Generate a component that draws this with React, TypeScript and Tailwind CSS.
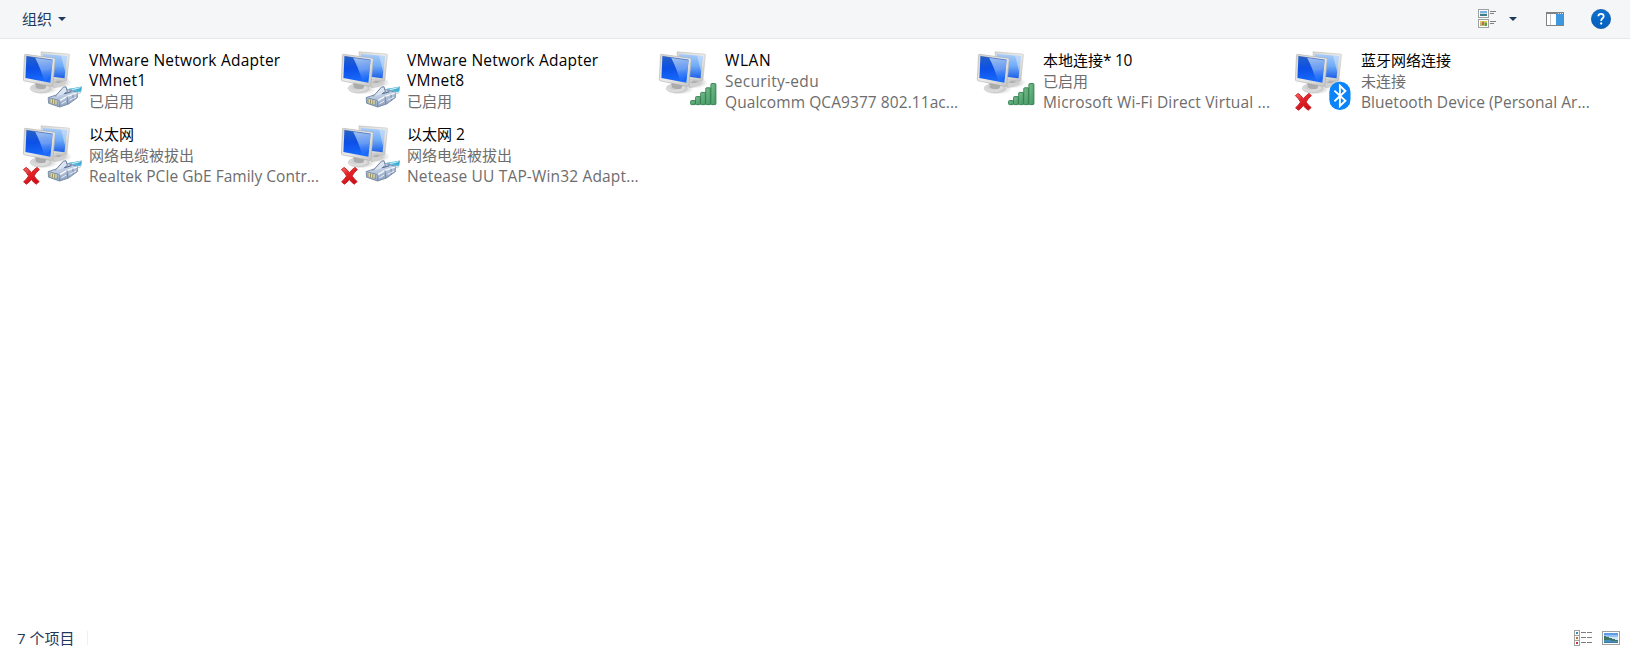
import type { ReactNode } from "react";

type Badge = "ethernet" | "signal" | "bluetooth";

interface Connection {
  id: string;
  title: ReactNode;
  status: ReactNode;
  device?: ReactNode;
  badge: Badge;
  disconnected?: boolean;
  compact?: boolean;
}

const connections: Connection[] = [
  {
    id: "vmnet1",
    title: (
      <>
        <span className="block leading-5 tracking-[0.22px]">VMware Network Adapter</span>
        <span className="block leading-5 tracking-[0.25px]">VMnet1</span>
      </>
    ),
    status: "已启用",
    badge: "ethernet",
    compact: true,
  },
  {
    id: "vmnet8",
    title: (
      <>
        <span className="block leading-5 tracking-[0.22px]">VMware Network Adapter</span>
        <span className="block leading-5 tracking-[0.25px]">VMnet8</span>
      </>
    ),
    status: "已启用",
    badge: "ethernet",
    compact: true,
  },
  {
    id: "wlan",
    title: <span className="tracking-[0.6px]">WLAN</span>,
    status: <span className="text-[15.5px] tracking-[0.3px]">Security-edu</span>,
    device: <span className="tracking-[0.07px]">Qualcomm QCA9377 802.11ac...</span>,
    badge: "signal",
  },
  {
    id: "local10",
    title: (
      <>
        <span className="text-[15px]">本地连接</span>
        <span className="tracking-[-0.3px]">* 10</span>
      </>
    ),
    status: "已启用",
    device: <span className="tracking-[0.15px]">Microsoft Wi-Fi Direct Virtual ...</span>,
    badge: "signal",
  },
  {
    id: "bluetooth",
    title: <span className="text-[15px]">蓝牙网络连接</span>,
    status: "未连接",
    device: <span className="tracking-[0.05px]">Bluetooth Device (Personal Ar...</span>,
    badge: "bluetooth",
    disconnected: true,
  },
  {
    id: "ethernet",
    title: <span className="text-[15px]">以太网</span>,
    status: "网络电缆被拔出",
    device: "Realtek PCIe GbE Family Contr...",
    badge: "ethernet",
    disconnected: true,
  },
  {
    id: "ethernet2",
    title: (
      <>
        <span className="text-[15px]">以太网</span> 2
      </>
    ),
    status: "网络电缆被拔出",
    device: <span className="tracking-[0.16px]">Netease UU TAP-Win32 Adapt...</span>,
    badge: "ethernet",
    disconnected: true,
  },
];

function IconDefs() {
  return (
    <svg className="h-0 w-0 shrink-0" width="0" height="0" aria-hidden="true">
      <defs>
        <linearGradient id="screen" x1="0.3" y1="0" x2="0.4" y2="1">
          <stop offset="0" stopColor="#2560c8" />
          <stop offset="0.45" stopColor="#0c50e6" />
          <stop offset="1" stopColor="#1a6cff" />
        </linearGradient>
        <linearGradient id="glare" x1="0.4" y1="0" x2="0.5" y2="1">
          <stop offset="0" stopColor="#c8dffa" stopOpacity="0.75" />
          <stop offset="0.5" stopColor="#a4cbfb" stopOpacity="0.6" />
          <stop offset="1" stopColor="#3c86f6" stopOpacity="0.1" />
        </linearGradient>
        <linearGradient id="backScreen" x1="0.3" y1="0" x2="0.3" y2="1">
          <stop offset="0" stopColor="#a9ccf8" />
          <stop offset="0.5" stopColor="#6fabf8" />
          <stop offset="1" stopColor="#1d5fe8" />
        </linearGradient>
        <linearGradient id="bezel" x1="0" y1="0" x2="1" y2="1">
          <stop offset="0" stopColor="#d6d6d4" />
          <stop offset="0.5" stopColor="#ebebe9" />
          <stop offset="1" stopColor="#c2c2c0" />
        </linearGradient>
        <radialGradient id="base" cx="0.4" cy="0.4" r="0.65">
          <stop offset="0" stopColor="#c0c0c0" />
          <stop offset="0.6" stopColor="#dedede" />
          <stop offset="1" stopColor="#cccccc" />
        </radialGradient>
        <radialGradient id="shade">
          <stop offset="0" stopColor="#666" stopOpacity="0.65" />
          <stop offset="1" stopColor="#999" stopOpacity="0" />
        </radialGradient>
        <linearGradient id="bars" x1="0" y1="0" x2="1" y2="1">
          <stop offset="0" stopColor="#7cc08f" />
          <stop offset="1" stopColor="#3f9560" />
        </linearGradient>
        <linearGradient id="plug" x1="0" y1="0" x2="0.4" y2="1">
          <stop offset="0" stopColor="#e6edf6" />
          <stop offset="0.5" stopColor="#bccbe0" />
          <stop offset="1" stopColor="#8ea2c0" />
        </linearGradient>
        <linearGradient id="cable" x1="0" y1="1" x2="1" y2="0">
          <stop offset="0" stopColor="#b9e2ef" />
          <stop offset="0.6" stopColor="#45b4d8" />
          <stop offset="1" stopColor="#3497c0" />
        </linearGradient>
        <linearGradient id="cross" x1="0" y1="0" x2="0.5" y2="1">
          <stop offset="0" stopColor="#f4706a" />
          <stop offset="0.45" stopColor="#e3252a" />
          <stop offset="1" stopColor="#cf0f18" />
        </linearGradient>
        <linearGradient id="help" x1="0" y1="0" x2="0" y2="1">
          <stop offset="0" stopColor="#0a6fd0" />
          <stop offset="1" stopColor="#0560bd" />
        </linearGradient>
      </defs>
    </svg>
  );
}

function Monitors() {
  return (
    <g>
      <ellipse cx="39" cy="34.5" rx="13" ry="6" fill="url(#shade)" />
      <path d="M32 36 L43 34 L46 36 Q40 40 33 40Z" fill="#d0d0d0" />
      <path
        d="M21 3.8 L48.6 6.1 Q49.5 6.2 49.4 7.1 L46.9 32 Q46.7 33 45.7 32.9 L22 30 Z"
        fill="url(#bezel)"
        stroke="#b8b8b6"
        strokeWidth="0.5"
      />
      <path d="M22.8 5.9 L46.8 7.9 L44.6 30.2 L24 27.7 Z" fill="url(#backScreen)" />
      <path d="M41 7.5 L46.8 7.9 L45.2 24 Z" fill="#d6e7fb" opacity="0.55" />
      <ellipse cx="24" cy="41" rx="14" ry="5.5" fill="url(#shade)" />
      <ellipse cx="20.6" cy="40.3" rx="10.4" ry="4.7" fill="url(#base)" stroke="#bababa" strokeWidth="0.5" />
      <path d="M15 34 L27 36 L25.4 40.5 Q20 42 16 39.5Z" fill="#ababab" />
      <path
        d="M5.5 6.3 L34.2 10.2 Q35.3 10.4 35.2 11.4 L32.9 37.6 Q32.7 38.7 31.6 38.5 L4.2 32.8 Q3.3 32.6 3.4 31.6 L4.5 7.2 Q4.6 6.2 5.5 6.3Z"
        fill="url(#bezel)"
        stroke="#acacaa"
        strokeWidth="0.6"
      />
      <path d="M6.4 8.3 L32.6 11.9 L30.4 34.8 L5.4 30.1 Z" fill="url(#screen)" />
      <path d="M15 9.5 L32.6 11.9 L31 28 L24.5 33.7 Q20.5 20 15 9.5Z" fill="url(#glare)" />
      <path d="M6.4 8.3 L32.6 11.9" stroke="#234fae" strokeWidth="0.5" fill="none" />
    </g>
  );
}

function EthernetBadge() {
  return (
    <g>
      <path d="M49 40.5 Q54 40 58 39.2 L61.8 38.4 L61.4 43.6 Q57 43.6 54.5 46.2 L49 44Z" fill="url(#cable)" />
      <path d="M52 41.6 L60.5 39.6" stroke="#d5f1f8" strokeWidth="1" />
      <path d="M54 46.5 L61.2 44.6" stroke="#9fb3bf" strokeWidth="0.8" />
      <path
        d="M28.2 49.6 L38 46.4 L42 42.6 L47.5 41.4 L57.2 44.4 L57.4 49.6 L48.6 56 L39.6 59 L28.6 55.2Z"
        fill="url(#plug)"
        stroke="#7286a6"
        strokeWidth="0.9"
        strokeLinejoin="round"
      />
      <path d="M28.2 49.6 L39.8 52.6 L39.6 59" fill="none" stroke="#7589a8" strokeWidth="0.9" />
      <path d="M39.8 52.6 L47 48.4 L57.2 44.8" fill="none" stroke="#f5f8fc" strokeWidth="1.4" />
      <path d="M47 48.4 L47.8 56 M53 46.6 L53.2 52" stroke="#71859f" strokeWidth="0.9" />
      <path d="M41.5 55.8 L46 53.2 M49.5 52.4 L56 49" stroke="#e8eff8" strokeWidth="1" />
      <path d="M35 48.6 L43.4 39.2 L46 38.8 L47.4 43.6 L43.8 46" fill="#dbe5f1" stroke="#6d809f" strokeWidth="1" />
      <path d="M44.5 45.8 L51.5 43.6" stroke="#5f7397" strokeWidth="1.2" />
      <path d="M30 51 V54.8 M32.4 51.6 V55.6 M34.8 52.2 V56.4 M37.2 52.8 V57" stroke="#9a9050" strokeWidth="1.1" />
      <path d="M31.2 51.2 V54.8 M33.6 51.8 V55.6 M36 52.4 V56.2" stroke="#eee6a0" strokeWidth="0.9" />
    </g>
  );
}

function SignalBadge() {
  return (
    <g fill="url(#bars)" stroke="#2c7a4c" strokeWidth="0.9">
      <rect x="34.6" y="52.6" width="5" height="4" rx="0.8" />
      <rect x="39.6" y="48.6" width="5" height="8" rx="0.8" />
      <rect x="44.7" y="44.4" width="5" height="12.2" rx="0.8" />
      <rect x="49.8" y="39.8" width="5" height="16.8" rx="0.8" />
      <rect x="54.9" y="35.6" width="5" height="21" rx="0.8" />
    </g>
  );
}

function BluetoothBadge() {
  return (
    <g>
      <rect x="37.3" y="33.8" width="21.2" height="28.2" rx="10.3" fill="#0a84f8" />
      <path
        d="M42.4 42.6 L53.4 52.8 L47.9 58 V37.8 L53.4 43 L42.4 53.2"
        fill="none"
        stroke="#fff"
        strokeWidth="1.9"
        strokeLinejoin="miter"
      />
    </g>
  );
}

function DisconnectedMark() {
  return (
    <path
      d="M3.4 47.6 L6.2 45.4 Q9.2 47.4 11.4 50.8 Q13.6 47.6 17 45.4 L19.4 47.6 Q16.4 50 14 54 Q16.4 57.4 19.2 59.6 L16.2 62.2 Q13.4 60.4 11.3 57.4 Q9.2 60.6 6.4 62.2 L3.6 59.8 Q6.6 57.4 8.6 54 Q6.4 50.4 3.4 47.6Z"
      fill="url(#cross)"
      stroke="#c51a20"
      strokeWidth="0.9"
      strokeLinejoin="round"
    />
  );
}

function ConnectionIcon({ badge, disconnected }: { badge: Badge; disconnected?: boolean }) {
  return (
    <svg className="h-16 w-16 shrink-0" viewBox="0 0 64 64" aria-hidden="true">
      <Monitors />
      {badge === "ethernet" && <EthernetBadge />}
      {badge === "signal" && <SignalBadge />}
      {badge === "bluetooth" && <BluetoothBadge />}
      {disconnected && <DisconnectedMark />}
    </svg>
  );
}

function ConnectionTile({ item }: { item: Connection }) {
  return (
    <li className="flex h-[74px] w-[318px] whitespace-nowrap">
      <ConnectionIcon badge={item.badge} disconnected={item.disconnected} />
      <div className="ml-[5px] flex flex-col pt-[2px] text-[15.5px]">
        <div className={item.compact ? "mb-px text-black" : "h-[21px] leading-[21px] text-black"}>{item.title}</div>
        <div className="h-[21px] text-[15px] leading-[21px] text-[#6d6d6d]">{item.status}</div>
        {item.device && <div className="h-5 leading-5 text-[#6d6d6d]">{item.device}</div>}
      </div>
    </li>
  );
}

function Caret() {
  return (
    <svg className="h-1 w-2" viewBox="0 0 8 4" aria-hidden="true">
      <path d="M0 0H8L4 4Z" fill="#1e395b" />
    </svg>
  );
}

function TilesViewIcon() {
  return (
    <svg className="h-5 w-[19px]" viewBox="0 0 19 20" shapeRendering="crispEdges" aria-hidden="true">
      <path d="M0.5 0.5H10.5V8.5H0.5Z M0.5 10.5H10.5V18.5H0.5Z" fill="#fff" stroke="#a0a0a0" />
      <path d="M2 2H9V4H2Z" fill="#7fb2e4" />
      <path d="M2 4H9V5H2Z" fill="#c3dcea" />
      <path d="M2 5H9V7H2Z" fill="#3f7c8c" />
      <path d="M2 12H9V17H2Z" fill="#a8c070" />
      <path d="M2 12H4V14H2Z M6 12H9V13H6Z" fill="#e7c65a" />
      <path d="M4 13H6V16H4Z" fill="#d0604e" />
      <path d="M7 14H9V17H7Z" fill="#5f9a45" />
      <path d="M12 2H18V3H12Z M12 4H16V5H12Z M12 12H18V13H12Z M12 14H16V15H12Z" fill="#808080" />
    </svg>
  );
}

function PreviewPaneIcon() {
  return (
    <svg className="h-[14px] w-[18px]" viewBox="0 0 18 14" shapeRendering="crispEdges" aria-hidden="true">
      <path d="M0 0H18V14H0Z" fill="#808487" />
      <path d="M1 2H17V13H1Z" fill="#fff" />
      <path d="M4 2H5V13H4Z" fill="#c4c6c8" />
      <path d="M10 2H17V13H10Z" fill="#3f97df" />
      <path d="M12 1H13V2H12Z M14 1H15V2H14Z M16 1H17V2H16Z" fill="#e4e6e8" />
    </svg>
  );
}

function HelpIcon() {
  return (
    <svg className="h-5 w-5" viewBox="0 0 20 20" aria-hidden="true">
      <circle cx="10" cy="10" r="9.6" fill="url(#help)" stroke="#064f9c" strokeWidth="0.7" />
      <path
        d="M7.3 7.2 Q7.4 4.8 10 4.8 Q12.7 4.8 12.7 7.2 Q12.7 8.6 11.3 9.5 Q10.2 10.2 10.2 11.9"
        fill="none"
        stroke="#fff"
        strokeWidth="1.7"
      />
      <circle cx="10.2" cy="14.5" r="1.15" fill="#fff" />
    </svg>
  );
}

function DetailsViewIcon() {
  return (
    <svg className="h-4 w-[18px]" viewBox="0 0 18 16" shapeRendering="crispEdges" aria-hidden="true">
      <path d="M0.5 0.5H5.5V15.5H0.5Z M0.5 5.5H5.5 M0.5 10.5H5.5" fill="#fff" stroke="#a3a3a3" />
      <path d="M2 2H4V4H2Z" fill="#3f8aa8" />
      <path d="M2 7H4V9H2Z" fill="#c9703a" />
      <path d="M2 12H4V14H2Z" fill="#cc3030" />
      <path d="M7 2H12V3H7Z M13 2H18V3H13Z M7 7H12V8H7Z M13 7H18V8H13Z M7 12H12V13H7Z M13 12H18V13H13Z" fill="#7d7d7d" />
    </svg>
  );
}

function LargeIconsViewIcon() {
  return (
    <svg className="h-[14px] w-[18px]" viewBox="0 0 18 14" shapeRendering="crispEdges" aria-hidden="true">
      <path d="M0.5 0.5H17.5V13.5H0.5Z" fill="#fff" stroke="#a0a0a0" />
      <path d="M2 2H16V4H2Z" fill="#5f9be6" />
      <path d="M2 4H16V6H2Z" fill="#94c3f2" />
      <path d="M2 6H16V9H2Z" fill="#cfe6f5" />
      <path d="M2 5H4V6H7V7H10V8H13V9H16V10H2Z" fill="#3f7462" />
      <path d="M2 9H9V10H16V12H2Z" fill="#4a90bd" />
      <path d="M2 11H16V12H2Z" fill="#3779a8" />
    </svg>
  );
}

export default function App() {
  return (
    <div className="flex h-[652px] w-[1630px] flex-col overflow-hidden bg-white font-['Open_Sans','Noto_Sans_CJK_SC',sans-serif]">
      <header className="flex h-[39px] shrink-0 items-center border-b border-[#e6e7e8] bg-[#f5f6f7] pl-[22px] pr-[19px] text-[#1e395b]">
        <button className="flex items-center gap-[6px] text-[15px] leading-5">
          组织
          <Caret />
        </button>
        <div className="ml-auto flex items-center">
          <TilesViewIcon />
          <span className="ml-3 mr-[29px] flex">
            <Caret />
          </span>
          <PreviewPaneIcon />
          <span className="ml-[27px]">
            <HelpIcon />
          </span>
        </div>
      </header>

      <main className="flex-1 pl-5 pt-[9px]">
        <ul className="flex flex-wrap content-start">
          {connections.map((item) => (
            <ConnectionTile key={item.id} item={item} />
          ))}
        </ul>
      </main>

      <footer className="flex h-7 shrink-0 items-center pl-[17px] pr-[10px] text-[#1e395b]">
        <span className="text-[15px] leading-5">7 个项目</span>
        <span className="ml-[13px] h-[14px] w-px bg-[#f0f0f0]" />
        <div className="ml-auto flex items-center gap-[10px]">
          <DetailsViewIcon />
          <LargeIconsViewIcon />
        </div>
      </footer>
      <IconDefs />
    </div>
  );
}
